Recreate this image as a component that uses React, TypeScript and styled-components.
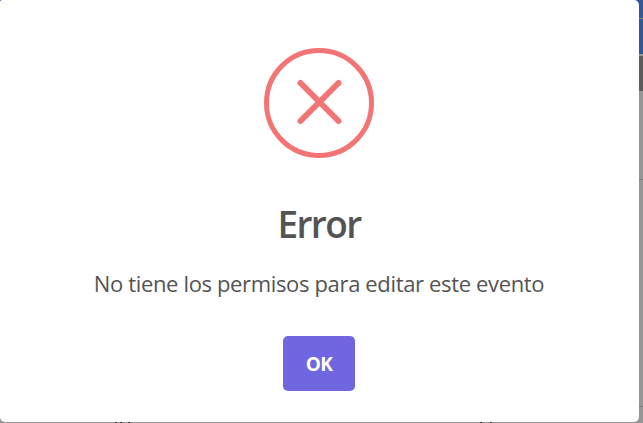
import React from "react";
import styled, { createGlobalStyle } from "styled-components";

const GlobalStyle = createGlobalStyle`
  *, *::before, *::after { box-sizing: border-box; }
  html, body { margin: 0; overflow: hidden; }
  body { font-family: "Open Sans", "Noto Sans", sans-serif; background: #969696; }
`;

const Screen = styled.div`
  position: relative;
  width: 643px;
  height: 423px;
  overflow: hidden;
`;

const Backdrop = styled.div`
  display: flex;
  flex-direction: column;
  height: 100%;
  background: #979696;
`;

const Band = styled.div<{ $height: number; $color: string }>`
  flex: 0 0 ${(p) => p.$height}px;
  background: ${(p) => p.$color};
`;

const Footer = styled.div`
  flex: 1;
  display: flex;
  align-items: flex-end;
  padding-left: 115px;
`;

const Tick = styled.span<{ $gap: number }>`
  width: 2px;
  height: 1px;
  margin-right: ${(p) => p.$gap}px;
  background: #333;
`;

const Dialog = styled.section`
  position: absolute;
  top: 0;
  left: 0;
  display: flex;
  flex-direction: column;
  align-items: center;
  width: 639px;
  height: 422px;
  padding: 48px 1px 0 0;
  border-radius: 2px 5px 5px 5px;
  background: #fff;
`;

const ErrorIcon = styled.svg`
  display: block;
  width: 110px;
  height: 110px;
`;

const Title = styled.h2`
  margin: 39px 0 0;
  color: #545454;
  font-size: 37px;
  font-weight: 600;
  line-height: 54px;
  letter-spacing: -1.6px;
  white-space: nowrap;
`;

const Message = styled.p`
  margin: 16px 0 0;
  color: #545454;
  font-size: 22px;
  line-height: 32px;
  letter-spacing: -0.35px;
  white-space: nowrap;
`;

const ConfirmButton = styled.button`
  width: 72px;
  height: 55px;
  margin: 37px 0 0;
  padding: 1px 0 0;
  border: 0;
  border-radius: 5px;
  background: #7066e0;
  color: #fff;
  font: 700 19px/54px "Open Sans", "Noto Sans", sans-serif;
  letter-spacing: -0.6px;
`;

const bands = [
  { height: 18, color: "#335796" },
  { height: 1, color: "#85888e" },
  { height: 35, color: "#335796" },
  { height: 2, color: "#999" },
  { height: 35, color: "#5c5c5c" },
  { height: 88, color: "#979696" },
  { height: 1, color: "#7c7c7c" },
  { height: 226, color: "#979696" },
  { height: 1, color: "#7c7c7c" },
];

const ticks = [3, 6, 350, 8, 0];

export default function App() {
  return (
    <Screen>
      <GlobalStyle />
      <Backdrop aria-hidden="true">
        {bands.map((band, i) => (
          <Band key={i} $height={band.height} $color={band.color} />
        ))}
        <Footer>
          {ticks.map((gap, i) => (
            <Tick key={i} $gap={gap} />
          ))}
        </Footer>
      </Backdrop>
      <Dialog role="alertdialog" aria-labelledby="title" aria-describedby="message">
        <ErrorIcon viewBox="0 0 110 110" fill="none" stroke="#f27474" aria-hidden="true">
          <circle cx="55" cy="55" r="52.5" strokeWidth="5" />
          <path d="M36.5 35 L74.5 73 M74.5 35 L36.5 73" strokeWidth="6" strokeLinecap="round" />
        </ErrorIcon>
        <Title id="title">Error</Title>
        <Message id="message">No tiene los permisos para editar este evento</Message>
        <ConfirmButton type="button">OK</ConfirmButton>
      </Dialog>
    </Screen>
  );
}
